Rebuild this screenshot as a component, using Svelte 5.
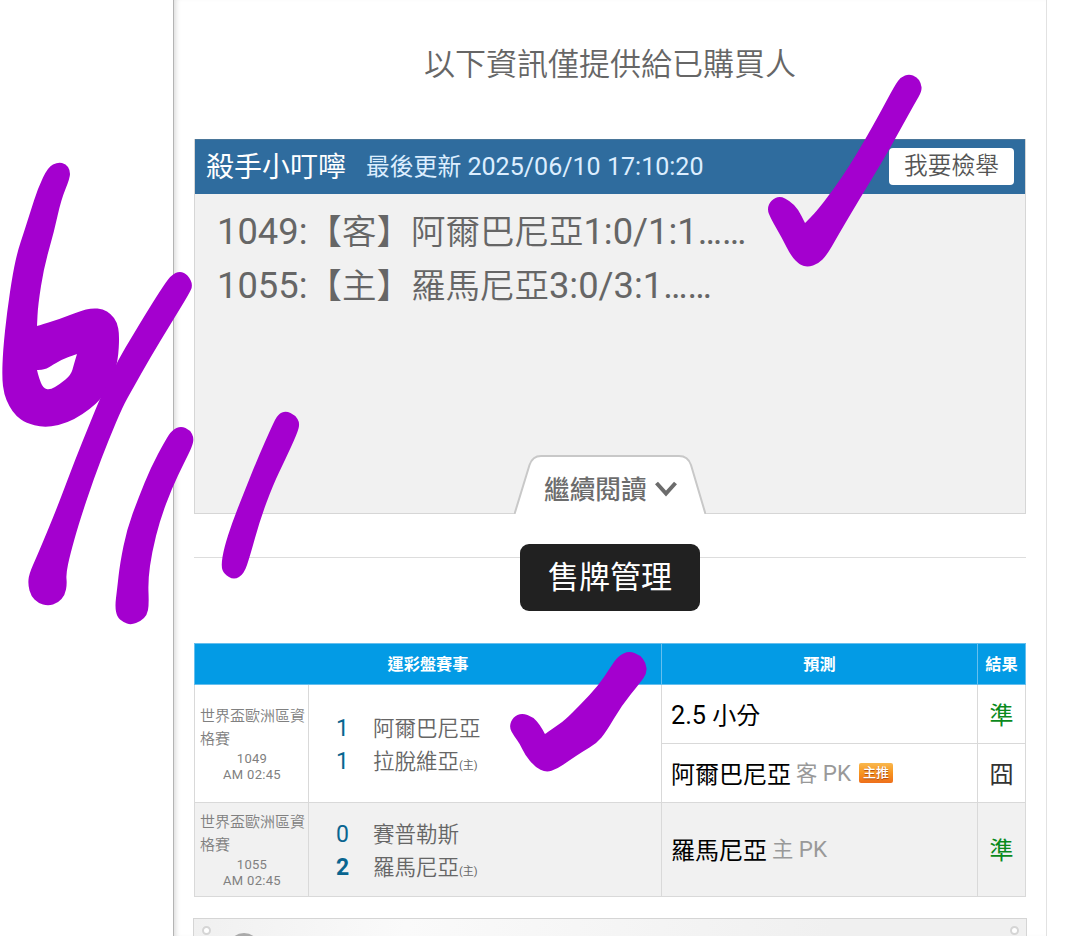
<script>
  let tips = [
    "1049:【客】阿爾巴尼亞1:0/1:1……",
    "1055:【主】羅馬尼亞3:0/3:1……"
  ]

  let games = [
    {
      league: "世界盃歐洲區資格賽",
      id: "1049",
      time: "AM 02:45",
      teams: [
        { name: "阿爾巴尼亞", score: 1 },
        { name: "拉脫維亞", score: 1, home: true }
      ],
      picks: [
        { name: "2.5 小分", result: "準", hit: true },
        { name: "阿爾巴尼亞", side: "客 PK", star: true, result: "囧" }
      ]
    },
    {
      league: "世界盃歐洲區資格賽",
      id: "1055",
      time: "AM 02:45",
      teams: [
        { name: "賽普勒斯", score: 0 },
        { name: "羅馬尼亞", score: 2, home: true, win: true }
      ],
      picks: [
        { name: "羅馬尼亞", side: "主 PK", result: "準", hit: true }
      ]
    }
  ]

  // outlines of the pen marks
  let marks = [
    "58,162 48,167 38,188 30,213 23,235 18,250 13,272 7,312 3,350 2,378 4,394 9,406 16,416 26,423 43,427.5 60,425 75,419 90,409 102,398 113,378 118,360 119.5,335 117,322 111,314 103,309 92,308 80,311 60,319 37,326 37,326 38,305 44,267 54,232 61,200 70,178 70,170 66,164",
    "180,271 171,275 160,291 145,315 133,335 118,360 106,386 99,401 90,423 75,460 60,500 50,525 37,556 29,574 28,585 31,596 38,603 48,606 58,603 65,595 67,584 66,574 70,555 79,523 94,478 109,439 123,406 132,390 150,358 170,325 189,294 193,285 188,275",
    "181,426 172,430 165,441 151,467 138,499 127,529 120,563 117,590 115,606 117,617 123,622 131,625 141,621 147,615 149,605 148,580 152,552 160,520 172,488 184,463 192,447 194,438 190,430",
    "286,411 278,414 272,426 257,460 243,495 232,523 224,548 221,566 224,574 234,580 244,574 250,556 260,520 273,485 285,460 297,434 300,423 295,415",
    "909,74 901,77 895,85 880,113 866,138 850,165 833,190 816,212 805,223 805,223 798,209 790,201 780,196 771,200 767,209 771,219 782,238 791,256 800,265 808,267 818,264 827,255 840,232 862,195 885,157 900,130 915,103 922,91 921,83 917,77",
    "629,651 618,656 610,668 598,686 580,705 565,720 555,727 545,734 545,734 540,725 533,717 522,713 513,717 509,727 514,736 520,744 525,755 535,767 546,772.5 557,769 570,760 582,752 597,743 606,732 622,705 640,683 647,673 646,663 640,655"
  ]
  let hole = "37,370 37,370 46,369.5 60,360 77,354 77,354 74,364 71,375 60,384 50,390 43,388 39,378"

  function outline(str) {
    const pts = str.split(" ").map(p => p.split(",").map(Number))
    const mid = (a, b) => (a[0] + b[0]) / 2 + " " + (a[1] + b[1]) / 2
    let d = "M" + mid(pts[pts.length - 1], pts[0])
    pts.forEach((p, i) => {
      d += "Q" + p[0] + " " + p[1] + " " + mid(p, pts[(i + 1) % pts.length])
    })
    return d + "Z"
  }

  // latin runs are set a bit larger than the chinese ones
  function runs(text) {
    return text.match(/[\x20-\x7e…]+|[^\x20-\x7e…]+/g)
  }
</script>

{#snippet mixed(text)}
  {#each runs(text) as run}<span class:latin={/^[\x20-\x7e…]/.test(run)}>{run}</span>{/each}
{/snippet}

<main>
  <h1>以下資訊僅提供給已購買人</h1>

  <section class="post">
    <header>
      <span class="author">殺手小叮嚀</span>
      <span class="updated">{@render mixed("最後更新 2025/06/10 17:10:20")}</span>
      <button class="report">我要檢舉</button>
    </header>
    <div class="tips">
      {#each tips as tip}
        <p>{@render mixed(tip)}</p>
      {/each}
    </div>
    <button class="more">
      <svg class="tab" viewBox="0 0 192 59">
        <path d="M0.5 59 L15.5 10 Q18.500 1 27 1 H165 Q174 1 177 10 L191.500 59" />
      </svg>
      <span>繼續閱讀</span>
      <svg class="chevron" viewBox="0 0 22 16"><path d="M1.500 2 L11 12.500 L20.500 2" /></svg>
    </button>
  </section>

  <div class="manage-row">
    <button class="manage">售牌管理</button>
  </div>

  <table>
    <colgroup>
      <col class="c-info"><col class="c-teams"><col class="c-pick"><col class="c-result">
    </colgroup>
    <thead>
      <tr>
        <th colspan="2">運彩盤賽事</th>
        <th>預測</th>
        <th>結果</th>
      </tr>
    </thead>
    {#each games as game, g}
      <tbody class:alt={g % 2 === 1}>
        {#each game.picks as pick, i}
          <tr class:half={game.picks.length > 1}>
            {#if i === 0}
              <td class="info" rowspan={game.picks.length}>
                <div class="league">{game.league}</div>
                <div class="num">{game.id}</div>
                <div class="num">{game.time}</div>
              </td>
              <td class="teams" rowspan={game.picks.length}>
                {#each game.teams as team}
                  <div class="team">
                    <span class="score" class:win={team.win}>{team.score}</span>
                    <span>{team.name}</span>
                    {#if team.home}<small>(主)</small>{/if}
                  </div>
                {/each}
              </td>
            {/if}
            <td class="pick">
              <div class="pick-line">
                <span class="pick-name">{@render mixed(pick.name)}</span>
                {#if pick.side}<span class="side">{@render mixed(pick.side)}</span>{/if}
                {#if pick.star}<span class="star">主推</span>{/if}
              </div>
            </td>
            <td class="result" class:hit={pick.hit}>{pick.result}</td>
          </tr>
        {/each}
      </tbody>
    {/each}
  </table>

  <section class="card">
    <i class="pin"></i>
    <i class="avatar"></i>
    <i class="pin end"></i>
  </section>
</main>

<svg class="ink" viewBox="0 0 1080 936">
  {#each marks as mark, i}
    <path d={outline(mark) + (i === 0 ? outline(hole) : "")} />
  {/each}
</svg>

<style>
  :global(body) {
    background: #fff;
    overflow: hidden;
  }

  main {
    box-sizing: border-box;
    width: 874px;
    height: 936px;
    margin-left: 173px;
    padding: 0 20px;
    overflow: hidden;
    border-left: 1px solid #b4b4b4;
    border-right: 1px solid #e2e2e2;
    box-shadow: inset 5px 0 5px -3px #ddd;
    font-family: Roboto, "Noto Sans CJK TC", sans-serif;
    color: #666;
  }

  button {
    border: 0;
    padding: 0;
    font-family: inherit;
  }

  h1 {
    margin: 0;
    padding-top: 43px;
    height: 96px;
    font-size: 31px;
    font-weight: 350;
    line-height: 44px;
    text-align: center;
  }

  .latin {
    font-size: 1.053em;
    font-weight: 400;
  }

  .post {
    display: flex;
    flex-direction: column;
    box-sizing: border-box;
    height: 375px;
    border: 1px solid #d6d6d6;
    border-top: 0;
    background: #f1f1f1;
  }

  .post header {
    display: flex;
    align-items: center;
    box-sizing: border-box;
    height: 55px;
    padding: 0 12px 0 11px;
    border-top: 1px solid #4a7699;
    background: #2f6c9e;
    color: #fff;
  }

  .author {
    padding-top: 2px;
    font-size: 28px;
    line-height: 40px;
  }

  .updated {
    margin-left: 20px;
    padding-bottom: 5px;
    font-size: 23.8px;
    color: #dceeff;
  }

  .report {
    width: 125px;
    height: 37px;
    margin: -1px -1px 0 auto;
    border-radius: 4px;
    background: #fff;
    color: #555;
    font-size: 23.7px;
    font-weight: 350;
    line-height: 37px;
  }

  .tips {
    flex: 1;
    padding: 11px 22px;
    font-size: 34.5px;
    font-weight: 350;
  }

  .tips p {
    margin: 0;
    height: 54px;
    line-height: 54px;
    white-space: nowrap;
  }

  .more {
    position: relative;
    display: flex;
    align-items: center;
    align-self: center;
    width: 192px;
    height: 59px;
    margin-bottom: -1px;
    padding: 6px 0 0 30px;
    box-sizing: border-box;
    background: none;
    color: #6c6c6c;
    font-size: 25.7px;
    font-weight: 500;
  }

  .more span {
    position: relative;
  }

  .tab {
    position: absolute;
    inset: 0;
    width: 192px;
    height: 59px;
    fill: #fff;
    stroke: #c8c8c8;
    stroke-width: 2;
  }

  .chevron {
    position: relative;
    width: 22px;
    height: 16px;
    margin: 3px 0 0 8px;
    fill: none;
    stroke: #6c6c6c;
    stroke-width: 4;
  }

  .manage-row {
    display: flex;
    justify-content: center;
    height: 86px;
    margin: 43px 0 0;
    background: linear-gradient(#ddd, #ddd) top / 100% 1px no-repeat;
  }

  .manage {
    width: 180px;
    height: 67px;
    margin-top: -13px;
    border-radius: 9px;
    background: #212121;
    color: #fff;
    font-size: 31px;
    line-height: 64px;
  }

  table {
    width: 831px;
    table-layout: fixed;
    border-collapse: collapse;
  }

  .c-info { width: 114px; }
  .c-teams { width: 353px; }
  .c-pick { width: 316px; }
  .c-result { width: 48px; }

  th {
    height: 38px;
    padding: 2px 0 0;
    border: 1px solid #66bfee;
    background: #039be5;
    color: #fff;
    font-size: 16.2px;
    font-weight: 700;
    line-height: 24px;
  }

  td {
    padding: 3px 0 0;
    border: 1px solid #d9d9d9;
  }

  tr {
    height: 94px;
  }

  thead tr {
    height: 40px;
  }

  tr.half {
    height: 59px;
  }

  .alt {
    background: #f1f1f1;
  }

  .info {
    padding: 0 2px 0 5px;
    font-size: 15px;
    color: #808080;
  }

  .league {
    margin-right: -3px;
    line-height: 23px;
    font-weight: 350;
    word-break: break-all;
  }

  .num {
    margin-left: -2px;
    font-size: 13px;
    letter-spacing: 0.3px;
    line-height: 15.500px;
    text-align: center;
  }

  .teams {
    padding-top: 2px;
  }

  .team {
    display: flex;
    align-items: baseline;
    height: 33px;
    padding-left: 27px;
    font-size: 21.500px;
    font-weight: 350;
    line-height: 33px;
  }

  .score {
    width: 37px;
    font-size: 23px;
    font-weight: 400;
    color: #096590;
  }

  .win {
    font-weight: 700;
  }

  small {
    font-size: 11px;
    font-weight: 400;
  }

  .pick-line {
    display: flex;
    align-items: center;
    padding-left: 9px;
    font-size: 24px;
    line-height: 36px;
  }

  .pick-name {
    color: #000;
  }

  .side {
    margin-left: 5px;
    padding-bottom: 3px;
    font-size: 21.3px;
    color: #999;
  }

  .star {
    width: 34px;
    height: 20px;
    margin-left: 8px;
    margin-bottom: 3px;
    border-radius: 2px;
    background: linear-gradient(#f9b84e, #f7941e 50%, #ee6f1c);
    color: #fff;
    font-size: 13px;
    font-weight: 500;
    line-height: 19px;
    text-align: center;
    text-shadow: 0 1px 1px #a8480c;
  }

  .result {
    font-size: 24px;
    line-height: 36px;
    text-align: center;
    color: #333;
  }

  .hit {
    color: #0b8a1c;
  }

  .card {
    display: flex;
    align-items: flex-start;
    box-sizing: border-box;
    height: 120px;
    margin: 21px -1px 0;
    padding: 7px 7px 0 8px;
    border: 1px solid #d5d5d5;
    background: linear-gradient(100deg, #f0f0f0, #fafafa 25%, #f0f0f0 75%);
  }

  .pin {
    box-sizing: border-box;
    width: 9px;
    height: 9px;
    border: 2px solid #d5d5d5;
    border-radius: 50%;
    background: #fff;
  }

  .avatar {
    width: 32px;
    height: 32px;
    margin: 7px 0 0 17px;
    border-radius: 50%;
    background: #aaa;
  }

  .end {
    margin-left: auto;
  }

  .ink {
    position: absolute;
    top: 0;
    left: 0;
    width: 1080px;
    height: 936px;
    fill: #a400cf;
    fill-rule: evenodd;
    pointer-events: none;
  }
</style>
